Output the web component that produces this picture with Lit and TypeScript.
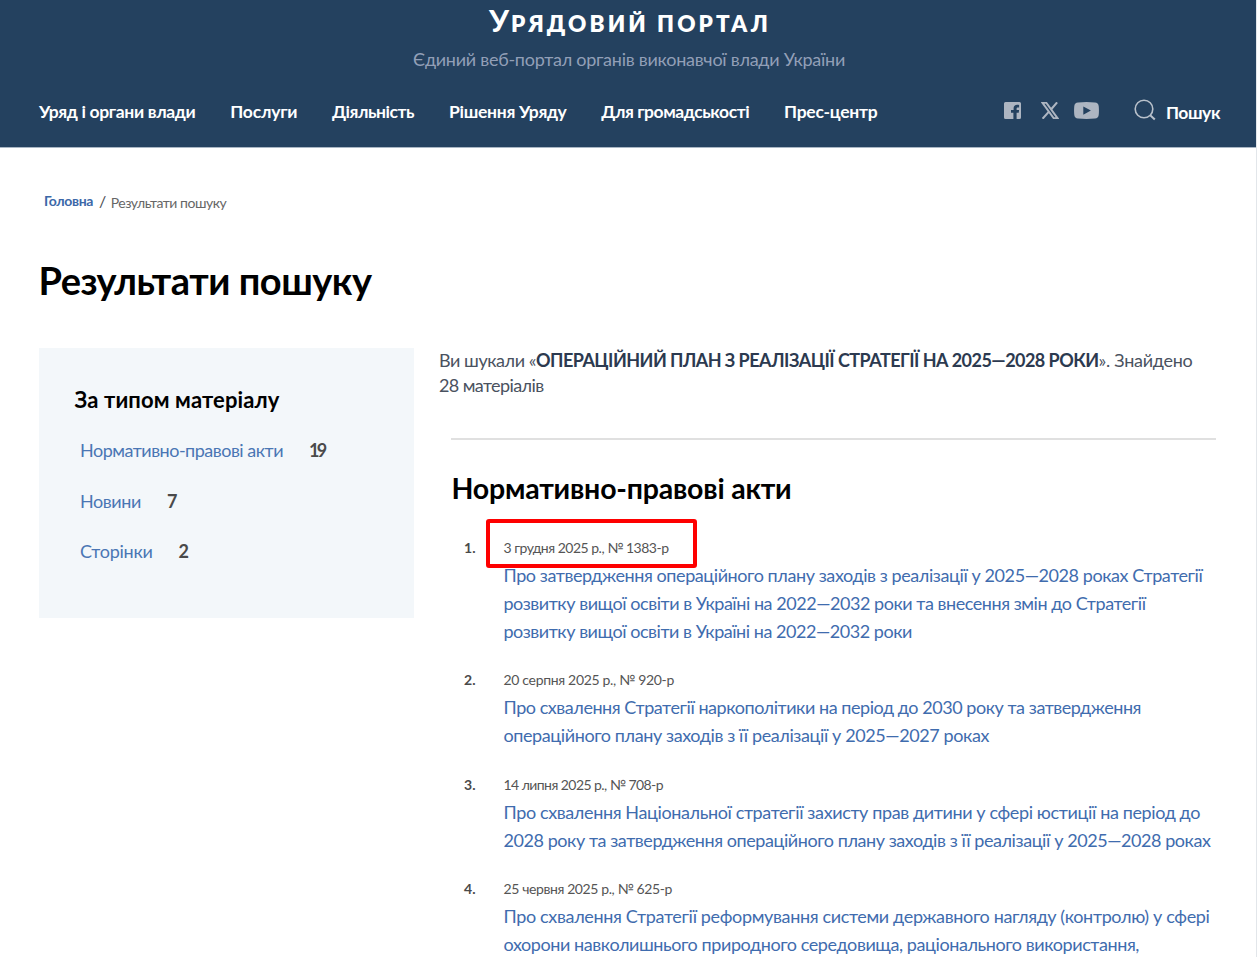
import { LitElement, html, css } from 'lit';
import { customElement, property } from 'lit/decorators.js';

/** A single line of text tracked to fill a given measure. */
@customElement('fit-text')
class FitText extends LitElement {
  @property({ type: Number }) measure = 0;

  static styles = css`
    :host { display: inline-block; white-space: nowrap; vertical-align: baseline; }
    .line { display: inline-block; }
  `;

  updated() {
    const line = this.renderRoot.querySelector('.line') as HTMLElement;
    const count = (this.textContent || '').trim().length;
    line.style.letterSpacing = '0px';
    const natural = line.getBoundingClientRect().width;
    const spacing = (this.measure - natural) / Math.max(1, count);
    line.style.letterSpacing = `${spacing.toFixed(3)}px`;
  }

  render() {
    return html`<span class="line"><slot></slot></span>`;
  }
}

type Line = [string, number];

const fit = (text: string, measure: number) =>
  html`<fit-text .measure=${measure}>${text}</fit-text>`;

const NAV: Line[] = [
  ['Уряд і органи влади', 156.5],
  ['Послуги', 67],
  ['Діяльність', 82],
  ['Рішення Уряду', 117.5],
  ['Для громадськості', 148],
  ['Прес-центр', 93.5],
];

const TYPES: { label: Line; count: Line }[] = [
  { label: ['Нормативно-правові акти', 203], count: ['19', 15.5] },
  { label: ['Новини', 61], count: ['7', 10] },
  { label: ['Сторінки', 72.5], count: ['2', 10] },
];

const RESULTS: { date: Line; lines: Line[] }[] = [
  {
    date: ['3 грудня 2025 р., № 1383-р', 165],
    lines: [
      ['Про затвердження операційного плану заходів з реалізації у 2025—2028 роках Стратегії', 699],
      ['розвитку вищої освіти в Україні на 2022—2032 роки та внесення змін до Стратегії', 642],
      ['розвитку вищої освіти в Україні на 2022—2032 роки', 408.5],
    ],
  },
  {
    date: ['20 серпня 2025 р., № 920-р', 170.5],
    lines: [
      ['Про схвалення Стратегії наркополітики на період до 2030 року та затвердження', 637.5],
      ['операційного плану заходів з її реалізації у 2025—2027 роках', 485.5],
    ],
  },
  {
    date: ['14 липня 2025 р., № 708-р', 159.5],
    lines: [
      ['Про схвалення Національної стратегії захисту прав дитини у сфері юстиції на період до', 696.5],
      ['2028 року та затвердження операційного плану заходів з її реалізації у 2025—2028 роках', 707],
    ],
  },
  {
    date: ['25 червня 2025 р., № 625-р', 168.5],
    lines: [
      ['Про схвалення Стратегії реформування системи державного нагляду (контролю) у сфері', 706],
      ['охорони навколишнього природного середовища, раціонального використання,', 635.5],
    ],
  },
];

@customElement('app-root')
class AppRoot extends LitElement {
  static styles = css`
    :host {
      display: block;
      box-sizing: border-box;
      height: 957px;
      overflow: hidden;
      background: #fff;
      color: #4a4d52;
      font-family: Lato, 'Open Sans', sans-serif;
      font-size: 18px;
      border-right: 1px solid #e2e6ea;
    }
    * { box-sizing: border-box; }
    a { color: inherit; text-decoration: none; }
    h1, h2, h3, p, ul, ol { margin: 0; padding: 0; list-style: none; }

    header {
      height: 148px;
      background: #24415f;
      border-bottom: 1px solid #a9b6c4;
      color: #fff;
    }
    .brand { display: flex; flex-direction: column; align-items: center; }
    .brand-name {
      display: flex; align-items: baseline; gap: 2px;
      height: 41px; line-height: 40px;
      font-size: 22.5px; font-weight: 800;
      padding-left: 4px;
    }
    .brand-name .initial { font-size: 31px; font-weight: 700; }
    .tagline { height: 32px; line-height: 32px; margin-top: 2px; padding-left: 2px; color: #929fb7; }
    .bar { display: flex; align-items: center; padding: 0 36px 0 39px; height: 30px; margin-top: 21px; }
    nav { display: flex; gap: 34.8px; font-size: 17.5px; font-weight: 700; line-height: 31px; flex: 1; }
    .social { display: flex; align-items: center; height: 30px; margin-top: -1px; }
    .social svg { display: block; }
    .social .x { margin-left: 20px; }
    .social .yt { margin-left: 15px; }
    .search { display: flex; align-items: center; margin-left: 35px; gap: 10px; font-size: 17.5px; font-weight: 700; }
    .search svg { margin-top: -3px; }
    .search span { line-height: 30px; padding-top: 3px; }

    .crumbs {
      display: flex; align-items: flex-start; height: 24px;
      margin: 42px 0 0 44px; font-size: 14px; line-height: 22px;
    }
    .crumbs a { color: #3c68a8; font-weight: 700; }
    .crumbs .sep { margin: 0 4.5px 0 6px; font-size: 16px; }
    .crumbs .here { padding-top: 2px; color: #666; }
    h1 {
      margin: 44px 0 0 38.5px; height: 45px; line-height: 44px;
      font-size: 38px; font-weight: 700; color: #000;
    }
    .columns { display: grid; grid-template-columns: 375px 777px; column-gap: 25px; margin: 45px 0 0 39px; align-items: start; }
    aside { height: 269.5px; background: #f3f7fa; padding: 37px 0 0 35.5px; }
    h3 { height: 30px; line-height: 30px; font-size: 22px; font-weight: 700; color: #000; }
    .types { padding: 10px 0 0 5.5px; }
    .types li { display: flex; gap: 26px; height: 50.5px; line-height: 50px; }
    .types a { color: #4a76b4; }
    .types b { color: #4a4a4a; }

    .summary { height: 51px; line-height: 25px; color: #4a5260; }
    .summary div { display: flex; }
    .summary b { color: #2c3a50; }
    .divider { height: 2px; margin: 39px 0 0 12px; width: 765px; background: #e0e0e0; }
    h2 { margin: 26px 0 0 12.5px; height: 44px; line-height: 44px; font-size: 28.5px; font-weight: 700; color: #000; }
    .results {
      display: grid; grid-template-rows: 132.2px 105.2px 104px 108px;
      margin: 27px 0 0 25px;
    }
    .results li { display: grid; grid-template-columns: 39.5px 1fr; align-items: start; }
    .num { font-size: 14px; font-weight: 700; line-height: 22px; color: #4a4a4a; }
    .date { height: 24px; font-size: 14px; line-height: 22px; color: #555; }
    .title { display: block; color: #3f6cae; }
    .title div { height: 28px; line-height: 28px; }
    .entry { position: relative; }
    .mark {
      position: absolute; left: -18px; top: -18px;
      width: 211px; height: 49px;
      border: 4px solid #fe0000; border-radius: 3px;
    }
  `;

  render() {
    return html`
      <header>
        <div class="brand">
          <div class="brand-name">
            <span class="initial">${fit('У', 20)}</span>${fit('РЯДОВИЙ ПОРТАЛ', 260)}
          </div>
          <div class="tagline">${fit('Єдиний веб-портал органів виконавчої влади України', 432)}</div>
        </div>
        <div class="bar">
          <nav>${NAV.map(([t, w]) => html`<a href="#">${fit(t, w)}</a>`)}</nav>
          <div class="social">
            <svg width="17" height="17" viewBox="0 0 17 17">
              <path fill="#adb5c1" fill-rule="evenodd" d="M1.5 0h14A1.5 1.5 0 0 1 17 1.500v14a1.500 1.500 0 0 1-1.500 1.500h-2.900v-6.300h2.100l.4-2.700h-2.500V6.600c0-.7.4-1.100 1.300-1.100h1.200V3c-.6-.1-1.200-.2-1.900-.2-2.200 0-3.600 1.200-3.600 3.500V8H7v2.700h2.400V17h-7.900A1.500 1.500 0 0 1 0 15.500v-14A1.500 1.500 0 0 1 1.500 0z"/>
            </svg>
            <svg class="x" width="18" height="17" viewBox="0 0 18 17">
              <path d="M1.500.9h3.900L16.500 16.100h-3.900z" fill="none" stroke="#adb5c1" stroke-width="1.900"/>
              <path d="M16.100.4 10.200 7.200M7.700 9.900 1.600 16.700" fill="none" stroke="#adb5c1" stroke-width="2.100"/>
            </svg>
            <svg class="yt" width="25" height="17" viewBox="0 0 25 17">
              <path fill="#adb5c1" fill-rule="evenodd" d="M4 .4Q12.500-.3 21 .4 24.300.6 24.700 4q.5 4.500 0 9-.4 3.300-3.700 3.600-8.500.7-17 0Q.7 16.300.3 13q-.5-4.500 0-9Q.7.6 4 .4zM9.300 4.500v8.200l7.600-4.100z"/>
            </svg>
          </div>
          <div class="search">
            <svg width="22" height="22" viewBox="0 0 22 22" fill="none" stroke="#b9c1cb" stroke-width="1.600">
              <circle cx="10" cy="10" r="8.800"/><path d="M16.200 16.200l4.600 4.300" stroke-width="2"/>
            </svg>
            <span>${fit('Пошук', 54)}</span>
          </div>
        </div>
      </header>
      <div class="crumbs">
        <a href="#">${fit('Головна', 49)}</a><span class="sep">/</span>
        <span class="here">${fit('Результати пошуку', 115.5)}</span>
      </div>
      <h1>${fit('Результати пошуку', 333)}</h1>
      <div class="columns">
        <aside>
          <h3>${fit('За типом матеріалу', 205)}</h3>
          <ul class="types">
            ${TYPES.map((t) => html`<li><a href="#">${fit(...t.label)}</a><b>${fit(...t.count)}</b></li>`)}
          </ul>
        </aside>
        <main>
          <div class="summary">
            <div>${fit('Ви шукали «', 97)}<b>${fit('ОПЕРАЦІЙНИЙ ПЛАН З РЕАЛІЗАЦІЇ СТРАТЕГІЇ НА 2025—2028 РОКИ', 562.5)}</b>${fit('». Знайдено', 94)}</div>
            <div>${fit('28 матеріалів', 104.5)}</div>
          </div>
          <div class="divider"></div>
          <h2>${fit('Нормативно-правові акти', 340)}</h2>
          <ol class="results">
            ${RESULTS.map((r, i) => html`
              <li>
                <span class="num">${i + 1}.</span>
                <div class="entry">
                  <div class="date">${fit(...r.date)}</div>
                  <a class="title" href="#">${r.lines.map((l) => html`<div>${fit(...l)}</div>`)}</a>
                  ${i === 0 ? html`<div class="mark"></div>` : null}
                </div>
              </li>`)}
          </ol>
        </main>
      </div>
    `;
  }
}
